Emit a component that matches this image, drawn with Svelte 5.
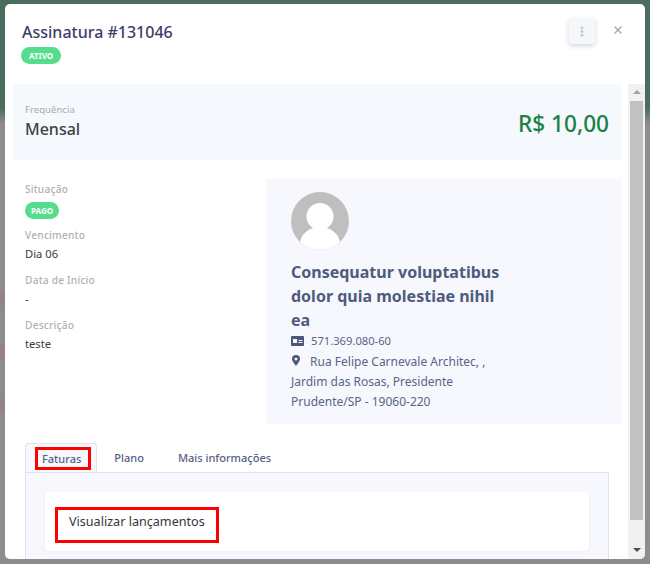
<script>
  const details = [
    { label: 'Vencimento', value: 'Dia 06' },
    { label: 'Data de Início', value: '-' },
    { label: 'Descrição', value: 'teste' }
  ];
  const tabs = ['Faturas', 'Plano', 'Mais informações'];
</script>

<div class="backdrop">
  <div class="modal">
    <header class="modal-header">
      <div>
        <h1>Assinatura #131046</h1>
        <span class="badge">ATIVO</span>
      </div>
      <div class="header-actions">
        <button class="menu-btn" aria-label="Opções">
          <svg width="4" height="11" viewBox="0 0 4 11"><circle cx="2" cy="1.7" r="1.5" /><circle cx="2" cy="5.500" r="1.5" /><circle cx="2" cy="9.300" r="1.5" /></svg>
        </button>
        <button class="close-btn" aria-label="Fechar">
          <svg width="8" height="8" viewBox="0 0 8 8"><path d="M.5.5l7 7M7.500.5l-7 7" /></svg>
        </button>
      </div>
    </header>

    <div class="modal-body">
      <div class="content">
        <section class="summary">
          <div>
            <div class="summary-label">Frequência</div>
            <div class="summary-value">Mensal</div>
          </div>
          <div class="price">R$ 10,00</div>
        </section>

        <section class="info">
          <div class="details">
            <div class="detail-label">Situação</div>
            <span class="badge status">PAGO</span>
            {#each details as item}
              <div class="detail-label">{item.label}</div>
              <div class="detail-value">{item.value}</div>
            {/each}
          </div>

          <div class="customer">
            <svg class="avatar" width="58" height="58" viewBox="0 0 58 58">
              <defs><clipPath id="round"><circle cx="29" cy="29" r="29" /></clipPath></defs>
              <circle cx="29" cy="29" r="29" fill="#bfbfbf" />
              <g clip-path="url(#round)" fill="#fff">
                <circle cx="29" cy="24.500" r="13.500" />
                <ellipse cx="29" cy="52" rx="20" ry="17" />
              </g>
            </svg>
            <h2>Consequatur voluptatibus dolor quia molestiae nihil ea</h2>
            <div class="contact">
              <svg width="13" height="10" viewBox="0 0 13 10"><path fill-rule="evenodd" d="M1 0h11a1 1 0 0 1 1 1v8a1 1 0 0 1-1 1H1a1 1 0 0 1-1-1V1a1 1 0 0 1 1-1zm1 3v4h4V3zm5.500 1v1h4V4zm0 2v1h4V6z" /></svg>
              <span>571.369.080-60</span>
            </div>
            <div class="address">
              <svg width="8" height="11" viewBox="0 0 8 11"><path fill-rule="evenodd" d="M4 0a4 4 0 0 1 4 4c0 2-2.500 5-4 7-1.500-2-4-5-4-7a4 4 0 0 1 4-4zm0 2.500a1.500 1.500 0 1 0 0 3 1.500 1.500 0 0 0 0-3z" /></svg>
              Rua Felipe Carnevale Architec, , Jardim das Rosas, Presidente Prudente/SP - 19060-220
            </div>
          </div>
        </section>

        <nav class="tabs">
          {#each tabs as tab, i}
            <div class="tab" class:active={i === 0}><span class:marked={i === 0}>{tab}</span></div>
          {/each}
        </nav>
        <div class="tab-panel">
          <div class="card">
            <span class="marked-box">Visualizar lançamentos</span>
          </div>
        </div>
      </div>

      <div class="scrollbar">
        <div class="arrow up"></div>
        <div class="track"><div class="thumb"></div></div>
        <div class="arrow down"></div>
      </div>
    </div>
  </div>
</div>

<style>
  :global(body) {
    margin: 0;
    font-family: "Noto Sans", "Open Sans", sans-serif;
  }
  .backdrop {
    width: 650px;
    height: 564px;
    box-sizing: border-box;
    padding: 4px 5px 0;
    overflow: hidden;
    background:
      radial-gradient(circle at 0 300px, rgba(170, 105, 125, 0.45), transparent 12px),
      radial-gradient(circle at 0 352px, rgba(170, 105, 125, 0.45), transparent 12px),
      radial-gradient(circle at 0 406px, rgba(170, 105, 125, 0.45), transparent 12px),
      linear-gradient(#4b6d5e 0, #4b6d5e 108px, #8f8c90 124px, #8d8c8e 100%);
  }
  .modal {
    height: 555px;
    background: #fff;
    border-radius: 5px;
    display: flex;
    flex-direction: column;
    overflow: hidden;
  }
  .modal-header {
    height: 80px;
    flex: none;
    box-sizing: border-box;
    padding: 16px 23px 0 17px;
    display: flex;
    justify-content: space-between;
  }
  h1 {
    margin: 0;
    font-size: 16px;
    line-height: 24px;
    font-weight: 500;
    color: #413c69;
  }
  .badge {
    display: inline-block;
    height: 17px;
    line-height: 17px;
    padding: 0 8px;
    margin: 3px 0 0 -1px;
    border-radius: 9px;
    background: #55dc8d;
    color: #fff;
    font-size: 8px;
    font-weight: 700;
    vertical-align: top;
  }
  .header-actions {
    display: flex;
    align-items: flex-start;
    gap: 19px;
    margin-top: -2px;
  }
  button {
    border: 0;
    padding: 0;
    background: none;
    display: flex;
    align-items: center;
    justify-content: center;
  }
  .menu-btn {
    width: 26px;
    height: 26px;
    border-radius: 4px;
    background: #f5f8fb;
    box-shadow: 0 2px 5px rgba(60, 70, 100, 0.22);
  }
  .menu-btn svg {
    fill: #c4cbd6;
  }
  .close-btn {
    width: 8px;
    height: 24px;
  }
  .close-btn svg {
    stroke: #a3a6ab;
    stroke-width: 1.3;
    fill: none;
  }
  .modal-body {
    flex: 1;
    min-height: 0;
    display: flex;
    padding-left: 8px;
  }
  .content {
    width: 608px;
    flex: none;
    overflow: hidden;
  }
  .summary {
    height: 76px;
    box-sizing: border-box;
    padding: 19px 12px 0;
    display: flex;
    justify-content: space-between;
    background: #f5f8fc;
  }
  .summary-label {
    font-size: 9.6px;
    line-height: 14px;
    color: #a9abaf;
  }
  .summary-value {
    font-size: 16px;
    line-height: 24px;
    font-weight: 500;
    color: #3f4144;
  }
  .price {
    font-size: 22.600px;
    line-height: 28px;
    font-weight: 500;
    color: #1d8044;
    margin-top: 7px;
  }
  .info {
    display: flex;
    margin-top: 19px;
  }
  .details {
    width: 253px;
    flex: none;
    box-sizing: border-box;
    padding: 2px 12px 0;
  }
  .detail-label {
    font-size: 10.200px;
    line-height: 16px;
    font-weight: 500;
    color: #b0b1b4;
    letter-spacing: 0.2px;
  }
  .details .status {
    display: block;
    width: fit-content;
    margin: 5px 0 8px;
    padding: 0 6px;
  }
  .detail-value {
    font-size: 11.200px;
    line-height: 18px;
    color: #383a3d;
    margin: 2px 0 9px;
  }
  .customer {
    width: 355px;
    height: 245px;
    box-sizing: border-box;
    padding: 13px 115px 0 25px;
    background: #f6f8fd;
    color: #5a6486;
  }
  .avatar {
    display: block;
  }
  h2 {
    margin: 10px 0 0;
    font-size: 16px;
    line-height: 24px;
    font-weight: 700;
    color: #4f5b7c;
  }
  .contact {
    display: flex;
    align-items: center;
    gap: 7px;
    margin: -1px 0 1px;
    font-size: 11.200px;
    line-height: 20px;
  }
  .contact svg, .address svg {
    fill: #4b5678;
    flex: none;
  }
  .address {
    font-size: 12px;
    line-height: 20px;
  }
  .address svg {
    margin: 0 7px 0 1px;
  }
  .tabs {
    display: flex;
    margin: 19px 0 0 12px;
    height: 29px;
    box-sizing: border-box;
  }
  .tab {
    padding: 0 17px;
    font-size: 11px;
    font-weight: 500;
    line-height: 30px;
    color: #566084;
  }
  .tab.active {
    padding: 0 5px 0 9px;
    background: #f6f8fd;
    border: 1px solid #dfe3ec;
    border-bottom: 0;
    border-radius: 4px 4px 0 0;
  }
  .marked {
    display: block;
    height: 23px;
    line-height: 17px;
    padding: 0 7px 0 4px;
    margin-top: 3px;
    box-sizing: border-box;
    border: 3px solid #f00;
  }
  .tab-panel {
    margin-left: 12px;
    width: 584px;
    height: 100px;
    box-sizing: border-box;
    padding: 19px 19px 0;
    background: #f6f8fd;
    border: 1px solid #dfe3ec;
  }
  .card {
    height: 59px;
    background: #fff;
    border-radius: 4px;
    padding: 15px 10px 0;
    box-sizing: border-box;
    box-shadow: 0 1px 4px rgba(80, 90, 120, 0.06);
  }
  .marked-box {
    display: block;
    width: fit-content;
    height: 36px;
    line-height: 24px;
    padding: 0 11px;
    box-sizing: border-box;
    border: 3px solid #f00;
    font-size: 12.600px;
    color: #33353a;
  }
  .scrollbar {
    width: 17px;
    margin-left: 7px;
    background: #f1f1f1;
    display: flex;
    flex-direction: column;
  }
  .arrow {
    height: 17px;
    flex: none;
    position: relative;
  }
  .arrow::after {
    content: "";
    position: absolute;
    left: 5px;
    top: 6px;
    border: 4px solid transparent;
    border-top: 0;
    border-bottom: 4px solid #a3a3a3;
  }
  .arrow.down::after {
    border-bottom: 0;
    border-top: 4px solid #505050;
  }
  .track {
    flex: 1;
  }
  .thumb {
    height: 419px;
    margin: 0 2px;
    background: #c1c1c1;
  }
</style>
